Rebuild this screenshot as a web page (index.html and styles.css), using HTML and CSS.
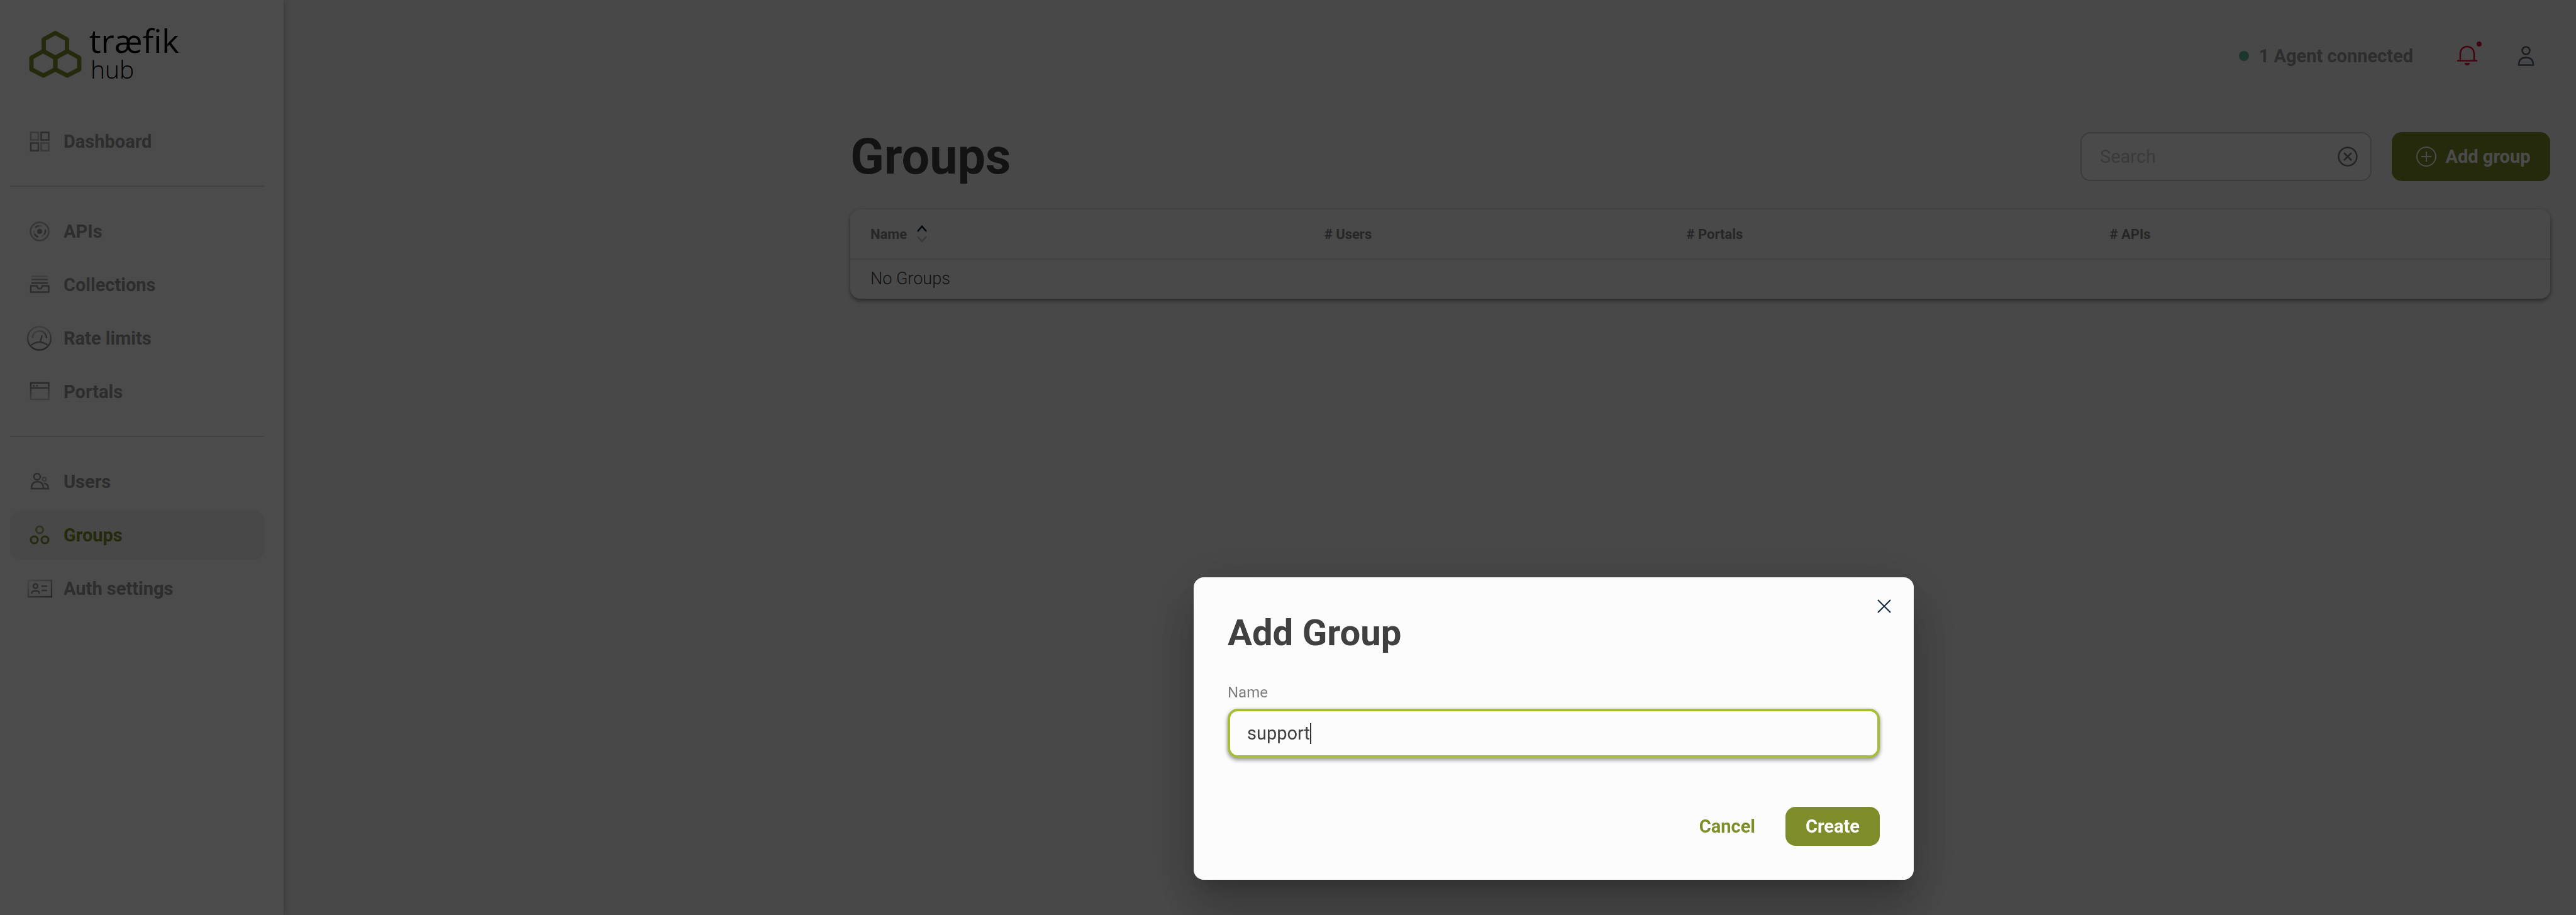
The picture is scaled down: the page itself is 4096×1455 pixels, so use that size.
FILE: index.html
```html
<!DOCTYPE html>
<html lang="en">
<head>
    <meta charset="UTF-8">
    <title>Groups - Traefik Hub</title>
    <link rel="stylesheet" href="styles.css">
</head>
<body>
    <div class="app">
        <aside class="sidebar">
            <a class="logo" href="#">
                <svg class="logo-mark" viewBox="0 0 86 78" fill="none" stroke="#7c8c2b" stroke-width="7" stroke-linejoin="round">
                    <path d="M43 4.500L62 15V35L43 45L24 35V15Z"/>
                    <path d="M23.500 34L43 45V64L23.500 74L4 64V45Z"/>
                    <path d="M62.500 34L82 45V64L62.500 74L43 64V45Z"/>
                </svg>
                <span class="logo-text">
                    <span class="logo-name">træfik</span>
                    <span class="logo-product">hub</span>
                </span>
            </a>

            <nav class="nav">
                <a class="nav-item" href="#">
                    <svg class="nav-icon" viewBox="0 0 40 40" fill="none" stroke="currentColor" stroke-width="2.500">
                        <path d="M22.500 5.500h12v12h-12zM6 22.500h12v12H6z"/>
                        <path opacity=".6" d="M6 5.500h12v12H6zM22.500 22.500h12v12h-12z"/>
                    </svg>
                    Dashboard
                </a>
                <hr class="nav-divider">
                <a class="nav-item" href="#">
                    <svg class="nav-icon" viewBox="0 0 40 40" fill="none" stroke="currentColor" stroke-width="2.500">
                        <circle cx="20" cy="20" r="14.500" opacity=".7"/>
                        <circle cx="20" cy="20" r="4" fill="currentColor" stroke="none"/>
                        <path d="M13 14a9 9 0 0 1 6-3M29 17a9 9 0 0 1-2 8M18 29a9 9 0 0 1-6-5"/>
                        <path opacity=".4" d="M19 11a9 9 0 0 1 5 1M27 25a9 9 0 0 1-4 3M12 24a9 9 0 0 1-1-5"/>
                    </svg>
                    APIs
                </a>
                <a class="nav-item" href="#">
                    <svg class="nav-icon" viewBox="0 0 40 40" fill="none" stroke="currentColor" stroke-width="2.500" stroke-linejoin="round">
                        <path opacity=".4" d="M7 6.500h26"/>
                        <path opacity=".7" d="M7 11.500h26"/>
                        <path d="M7 17h26"/>
                        <path d="M6 21.500h10q0 4.500 4 4.500t4-4.500h10.500v10H6z"/>
                    </svg>
                    Collections
                </a>
                <a class="nav-item" href="#">
                    <svg class="nav-icon" viewBox="0 0 40 40" fill="none" stroke="url(#fadeUp)" stroke-width="2.500">
                        <circle cx="19.500" cy="20" r="18.500"/>
                        <path stroke="url(#fadeLeft)" d="M8.500 19.500a11 11 0 0 1 22.500 0"/>
                        <path stroke="currentColor" d="M21 26l3-11M6 31q13.500-10 27 0"/>
                    </svg>
                    Rate limits
                </a>
                <a class="nav-item" href="#">
                    <svg class="nav-icon" viewBox="0 0 40 40" fill="none" stroke="url(#fadeDown)" stroke-width="2.500">
                        <path d="M6 6h28.500v26H6z"/>
                        <path stroke="currentColor" d="M6 14h28.500M9.500 10.500h2.500M14.500 10.500h2.500"/>
                    </svg>
                    Portals
                </a>
                <hr class="nav-divider">
                <a class="nav-item" href="#">
                    <svg class="nav-icon" viewBox="0 0 40 40" fill="none" stroke="currentColor" stroke-width="2.500">
                        <circle cx="16" cy="12" r="5"/>
                        <circle cx="27.500" cy="16" r="3" opacity=".6"/>
                        <path d="M7 31q0-11 9.500-11T26 31zM27 22.500q7 1 7 8.500h-8"/>
                    </svg>
                    Users
                </a>
                <a class="nav-item active" href="#">
                    <svg class="nav-icon" viewBox="0 0 40 40" fill="none" stroke="currentColor" stroke-width="3">
                        <circle cx="20" cy="11.500" r="5.500" opacity=".7"/>
                        <circle cx="11.500" cy="27.500" r="5.500"/>
                        <circle cx="28.500" cy="27.500" r="5.500"/>
                    </svg>
                    Groups
                </a>
                <a class="nav-item" href="#">
                    <svg class="nav-icon" viewBox="0 0 40 40" fill="none" stroke="currentColor" stroke-width="2.500">
                        <path stroke="url(#fadeLeft)" d="M2 7h37v26H2z"/>
                        <circle cx="13.500" cy="16" r="3.500"/>
                        <path d="M7.500 28v-1q0-3.500 6-3.500t6 3.500v1M23 16h9M23 23h9"/>
                    </svg>
                    Auth settings
                </a>
            </nav>
        </aside>

        <div class="page">
            <header class="topbar">
                <span class="agent-status"><span class="agent-dot"></span>1 Agent connected</span>
                <button class="icon-btn bell" type="button" aria-label="Notifications">
                    <svg width="39" height="46" viewBox="0 0 39 46" fill="none" stroke="#e0123c" stroke-width="2.500">
                        <path d="M5 30V19a11 11 0 0 1 22 0V30M0 30.500h32"/>
                        <path fill="#e0123c" stroke="none" d="M12 34h8a4 4 0 0 1-8 0z"/>
                        <circle cx="35" cy="4" r="4" fill="#e0123c" stroke="none"/>
                    </svg>
                </button>
                <button class="icon-btn" type="button" aria-label="Account">
                    <svg width="27" height="32" viewBox="0 0 27 32" fill="none" stroke="#54616e" stroke-width="2.500">
                        <circle cx="13.500" cy="7.500" r="6"/>
                        <path d="M2 30.500q0-12 11.500-12t11.500 12z"/>
                    </svg>
                </button>
            </header>

            <main class="content">
                <div class="content-head">
                    <h1>Groups</h1>
                    <div class="search">
                        <input type="text" id="search" placeholder="Search" aria-label="Search">
                        <button class="search-clear" type="button" aria-label="Clear search">
                            <svg width="32" height="32" viewBox="0 0 32 32" fill="none" stroke="currentColor" stroke-width="2.500">
                                <circle cx="16" cy="16" r="14.500"/>
                                <path d="M10 10l12 12M22 10L10 22"/>
                            </svg>
                        </button>
                    </div>
                    <button class="btn btn-add" type="button">
                        <svg width="32" height="32" viewBox="0 0 32 32" fill="none" stroke="currentColor" stroke-width="2">
                            <circle cx="16" cy="16" r="15"/>
                            <path d="M16 8v16M8 16h16"/>
                        </svg>
                        Add group
                    </button>
                </div>

                <table class="groups-table">
                    <colgroup>
                        <col class="col-name">
                        <col class="col-users">
                        <col class="col-portals">
                        <col class="col-apis">
                    </colgroup>
                    <thead>
                        <tr>
                            <th>
                                <span class="sortable">Name
                                    <svg width="18" height="28" viewBox="0 0 18 28" fill="none" stroke="#001428" stroke-width="2.500">
                                        <path d="M2 10l7-8 7 8"/>
                                        <path opacity=".25" d="M2 18l7 8 7-8"/>
                                    </svg>
                                </span>
                            </th>
                            <th># Users</th>
                            <th># Portals</th>
                            <th># APIs</th>
                        </tr>
                    </thead>
                    <tbody>
                        <tr>
                            <td colspan="4">No Groups</td>
                        </tr>
                    </tbody>
                </table>
            </main>
        </div>
    </div>

    <!-- Add group modal -->
    <div class="overlay">
        <form class="modal" role="dialog" aria-labelledby="modalTitle">
            <button class="modal-close" type="button" aria-label="Close">
                <svg width="22" height="22" viewBox="0 0 22 22" fill="none" stroke="#0c2740" stroke-width="2">
                    <path d="M1 1l20 20M21 1L1 21"/>
                </svg>
            </button>
            <h2 id="modalTitle">Add Group</h2>
            <label for="groupName">Name</label>
            <div class="field">
                <input type="text" id="groupName" value="support">
                <span class="caret"></span>
            </div>
            <div class="modal-actions">
                <button class="btn btn-text" type="button">Cancel</button>
                <button class="btn btn-create" type="button">Create</button>
            </div>
        </form>
    </div>

    <!-- Shared gradients for the nav icons -->
    <svg class="defs" width="0" height="0">
        <defs>
            <linearGradient id="fadeUp" x1="0" y1="1" x2="0" y2="0">
                <stop offset="0" stop-color="#7f7f7f"/>
                <stop offset="1" stop-color="#cfcfcf"/>
            </linearGradient>
            <linearGradient id="fadeDown" x1="0" y1="0" x2="0" y2="1">
                <stop offset="0" stop-color="#8a8a8a"/>
                <stop offset="1" stop-color="#cfcfcf"/>
            </linearGradient>
            <linearGradient id="fadeLeft" x1="1" y1="1" x2="0" y2="0">
                <stop offset="0" stop-color="#7f7f7f"/>
                <stop offset="1" stop-color="#e6e6e6"/>
            </linearGradient>
        </defs>
    </svg>
</body>
</html>
```
FILE: styles.css
```css
* {
    box-sizing: border-box;
}

body {
    margin: 0;
    background-color: #f0f0f0;
    font-family: Roboto, "Liberation Sans", sans-serif;
    font-size: 29px;
    color: #404040;
}

button, input {
    font-family: inherit;
    font-size: inherit;
}

button {
    border: none;
    background: none;
    padding: 0;
    cursor: pointer;
}

a {
    text-decoration: none;
}

svg {
    display: block;
    flex: none;
}

.app {
    display: flex;
    min-height: 100vh;
}

/* Sidebar */
.sidebar {
    flex: none;
    width: 451px;
    padding: 0 31px 0 16px;
    background-color: #fcfcfc;
    box-shadow: 0 0 10px rgba(0, 0, 0, 0.25);
}

.logo {
    display: flex;
    gap: 12px;
    height: 186px;
    padding: 30px 0 0 30px;
    color: #000;
}

.logo-mark {
    width: 84px;
    height: 76px;
    margin-top: 18px;
}

.logo-text {
    display: flex;
    flex-direction: column;
    font-family: "Open Sans", "Noto Sans", sans-serif;
}

.logo-name {
    font-size: 52px;
    font-weight: 500;
    line-height: 68px;
}

.logo-product {
    padding-left: 2px;
    font-size: 39px;
    font-weight: 300;
    line-height: 24px;
}

.nav {
    display: flex;
    flex-direction: column;
    gap: 7px;
}

.nav-item {
    display: flex;
    align-items: center;
    gap: 18px;
    height: 78px;
    padding-left: 27px;
    border-radius: 16px;
    font-weight: 700;
    color: #969696;
}

.nav-item.active {
    background-color: #f0f0f0;
    color: #7c8c2b;
}

.nav-icon {
    width: 40px;
    height: 40px;
}

.nav-divider {
    width: 100%;
    height: 2px;
    margin: 24px 0 25px;
    border: none;
    background-color: #d9d9d9;
}

/* Page */
.page {
    flex: 1;
    padding: 59px 41px 0;
}

.topbar {
    display: flex;
    justify-content: flex-end;
    align-items: center;
    height: 60px;
    padding-right: 25px;
}

.agent-status {
    display: flex;
    align-items: center;
    gap: 16px;
    margin-right: 70px;
    font-weight: 700;
    color: #969696;
}

.agent-dot {
    width: 16px;
    height: 16px;
    border-radius: 50%;
    background-color: #5cb890;
}

.bell {
    margin-right: 57px;
}

.content {
    max-width: 2703px;
    margin: 91px 0 0 auto;
}

.content-head {
    display: flex;
    align-items: center;
    gap: 32px;
    height: 78px;
    margin-bottom: 45px;
}

h1 {
    flex: 1;
    margin: 0;
    font-size: 79px;
    font-weight: 700;
}

.search {
    display: flex;
    align-items: center;
    width: 463px;
    height: 78px;
    padding: 0 20px 0 29px;
    border: 2px solid #c6c6c6;
    border-radius: 16px;
    background-color: #f9f9f9;
}

.search input {
    flex: 1;
    min-width: 0;
    padding: 0;
    border: none;
    outline: none;
    background: none;
}

.search input::placeholder {
    color: #c4c4c4;
}

.search-clear {
    color: #7a7a7a;
}

.btn {
    display: flex;
    align-items: center;
    justify-content: center;
    border-radius: 16px;
    font-weight: 700;
}

.btn-add {
    gap: 14px;
    width: 252px;
    height: 78px;
    padding-left: 8px;
    background-color: #7c8c2b;
    color: #fcfcfc;
}

.groups-table {
    width: 100%;
    table-layout: fixed;
    border-spacing: 0;
    border-radius: 16px;
    background-color: #f6f6f6;
    box-shadow: 0 0 6px rgba(0, 0, 0, 0.12), 0 4px 6px rgba(0, 0, 0, 0.35);
}

.col-name {
    width: 26.7%;
}

.col-users {
    width: 21.3%;
}

.col-portals {
    width: 24.9%;
}

.groups-table th,
.groups-table td {
    padding: 0 32px;
    text-align: left;
}

.groups-table th {
    height: 80px;
    border-bottom: 2px solid #d9d9d9;
    font-size: 22px;
    font-weight: 700;
    color: #7f7f7f;
}

.groups-table td {
    height: 62px;
    padding-bottom: 2px;
    font-size: 27px;
    font-weight: 300;
}

.sortable {
    display: flex;
    align-items: center;
    gap: 15px;
}

/* Modal */
.overlay {
    position: fixed;
    inset: 0;
    display: flex;
    justify-content: flex-end;
    align-items: flex-end;
    padding: 0 1053px 56px 0;
    background-color: rgba(0, 0, 0, 0.7);
}

.modal {
    position: relative;
    width: 1145px;
    padding: 54px;
    border-radius: 16px;
    background-color: #fcfcfc;
    box-shadow: 0 22px 30px -14px rgba(0, 0, 0, 0.2),
        0 48px 76px 6px rgba(0, 0, 0, 0.14),
        0 18px 92px 16px rgba(0, 0, 0, 0.12);
}

.modal-close {
    position: absolute;
    top: 35px;
    right: 36px;
}

.modal h2 {
    margin: 0 0 46px;
    font-size: 58px;
    font-weight: 700;
    line-height: 69px;
}

.modal label {
    display: block;
    margin-bottom: 12px;
    font-size: 24px;
    line-height: 28px;
    color: #7f7f7f;
}

.field {
    position: relative;
}

.field input {
    display: block;
    width: 100%;
    height: 78px;
    padding: 0 27px;
    border: 4px solid #a9bb3a;
    border-radius: 16px;
    outline: none;
    background-color: #fcfcfc;
    box-shadow: 0 0 6px rgba(0, 0, 0, 0.12), 0 4px 6px rgba(0, 0, 0, 0.35);
    color: #404040;
}

/* Text cursor after the typed value */
.caret {
    position: absolute;
    top: 23px;
    left: 131px;
    width: 2px;
    height: 33px;
    background-color: #333;
}

.modal-actions {
    display: flex;
    justify-content: flex-end;
    margin-top: 78px;
}

.modal-actions .btn {
    height: 62px;
    padding: 0 32px;
}

.btn-text {
    margin-right: 16px;
    color: #7f8c2a;
}

.btn-create {
    background-color: #7f8c2a;
    color: #fff;
}

.defs {
    position: absolute;
}
```
